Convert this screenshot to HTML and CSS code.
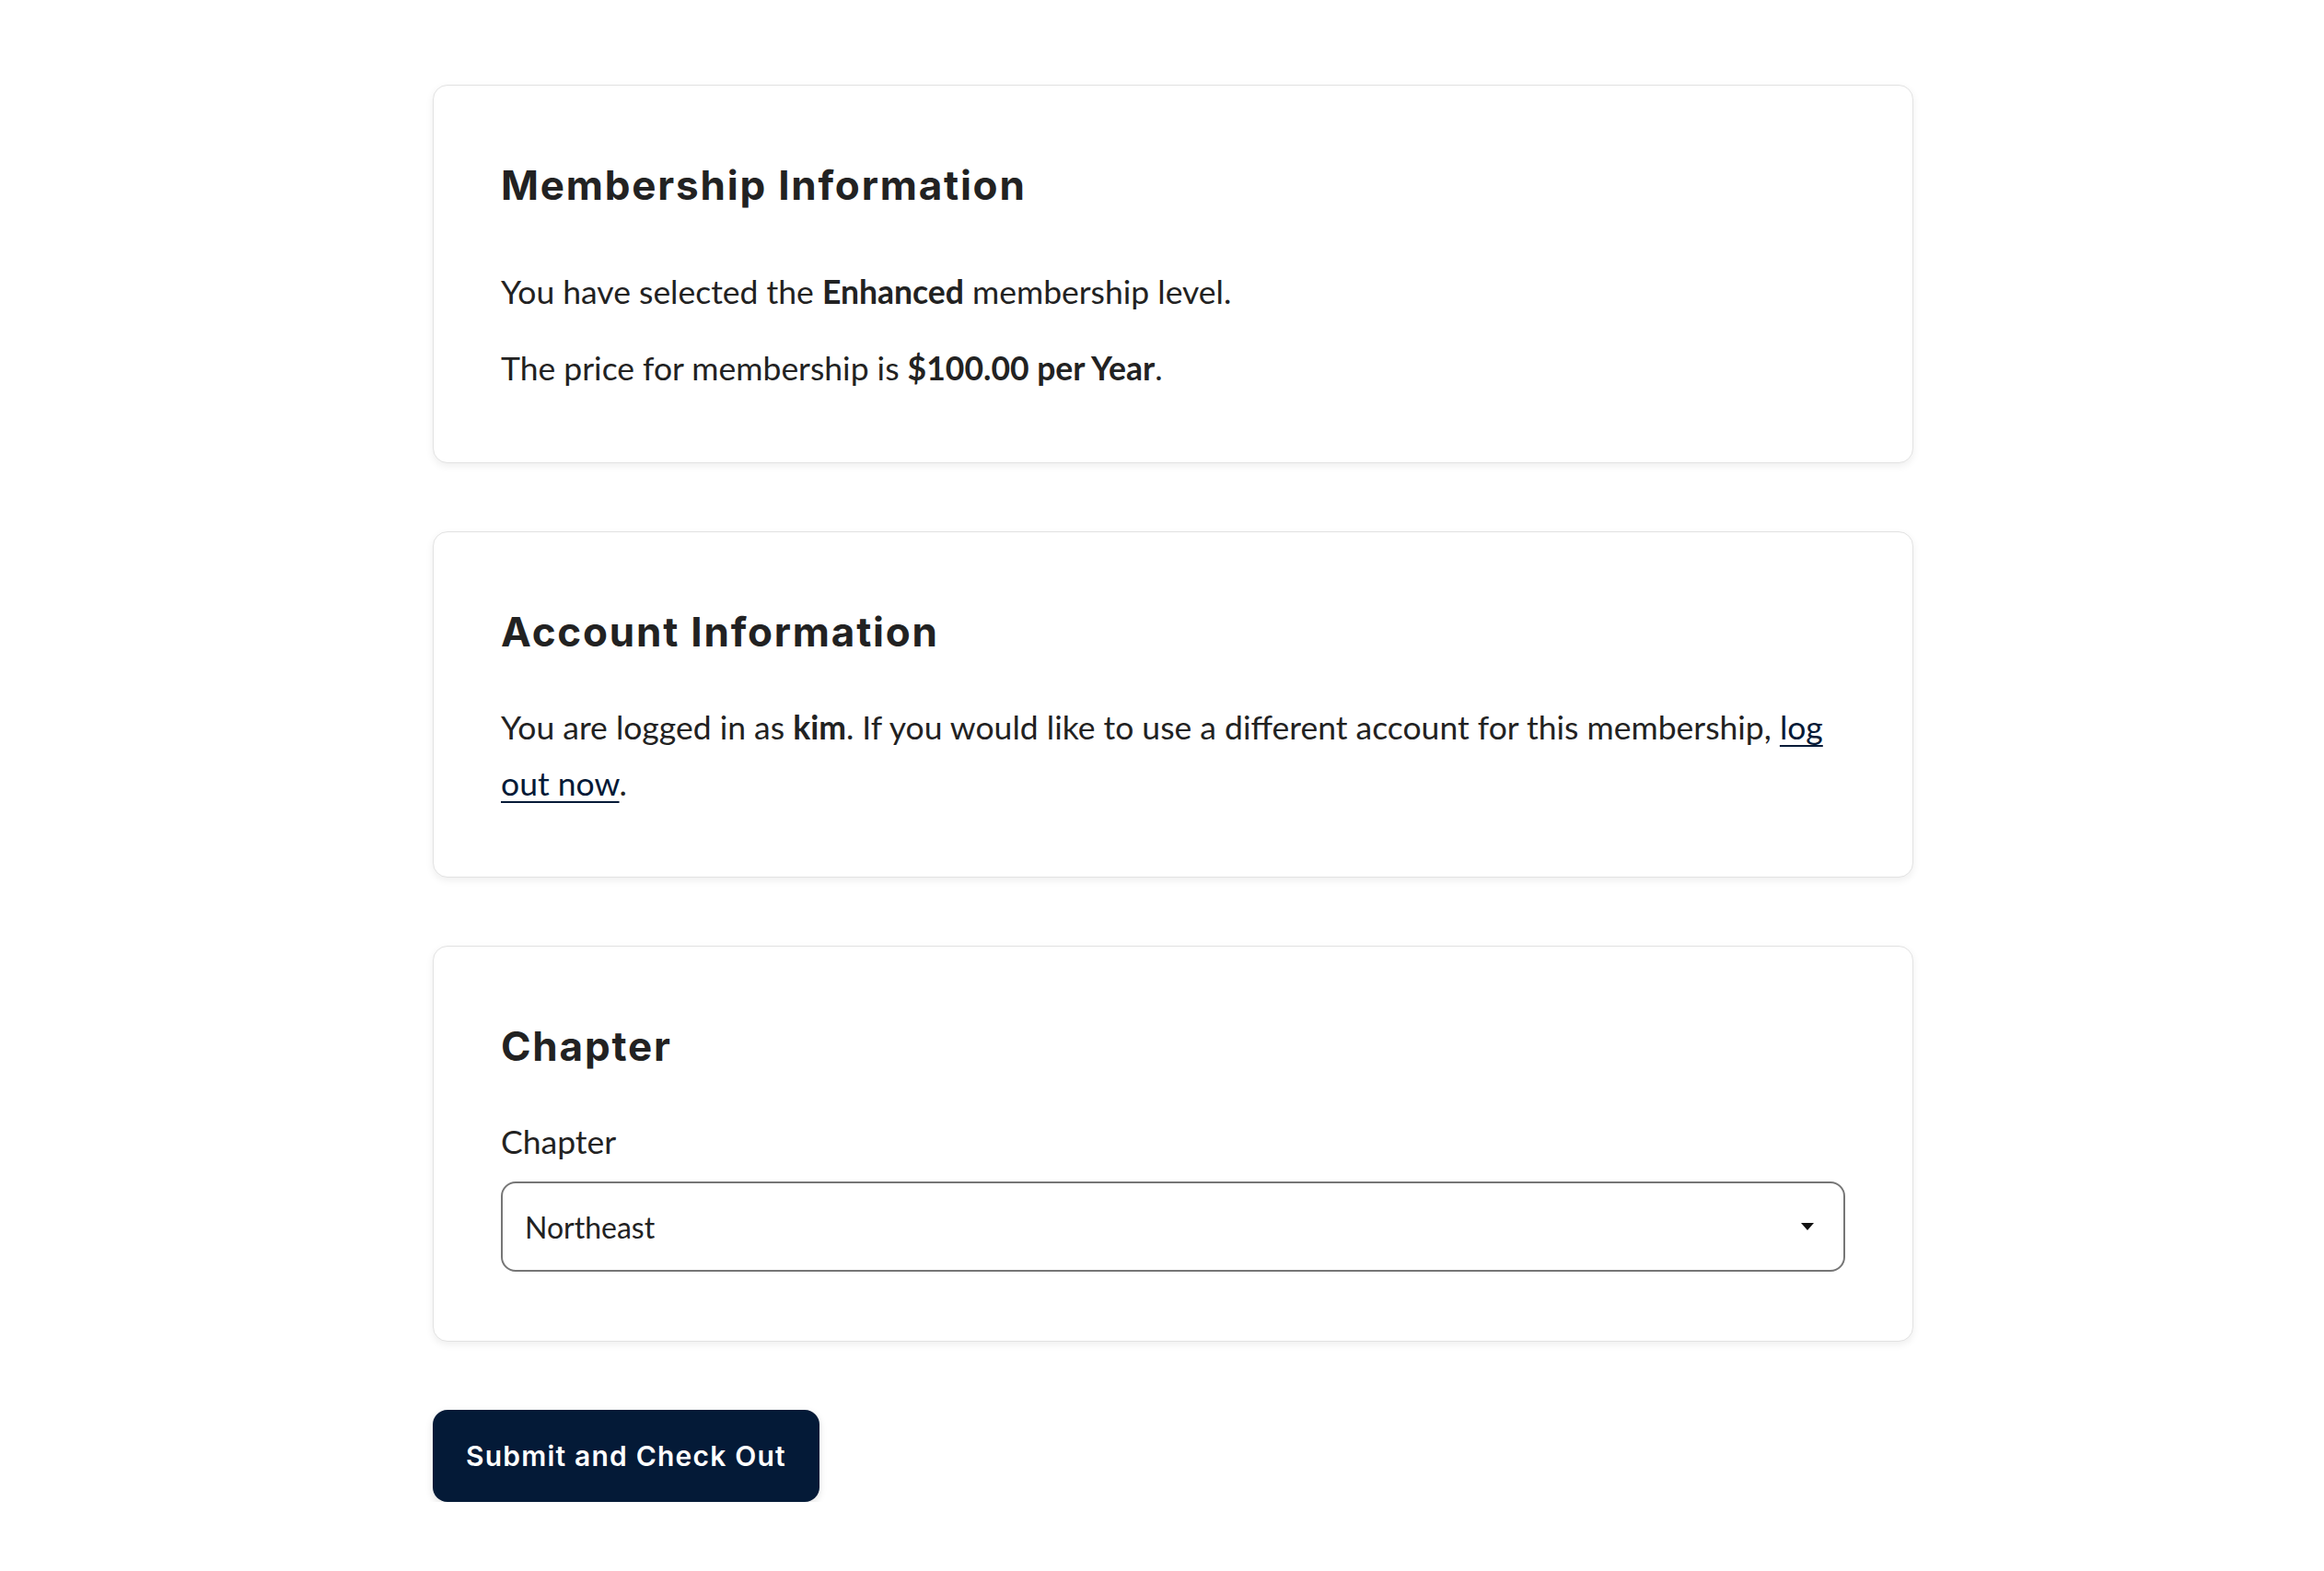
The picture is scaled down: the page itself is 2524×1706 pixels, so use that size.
FILE: index.html
```html
<!DOCTYPE html>
<html lang="en">
<head>
<meta charset="utf-8">
<title>Membership Checkout</title>
<link rel="stylesheet" href="styles.css">
</head>
<body>
<main class="checkout">
  <section class="card">
    <h2 class="card-title">Membership Information</h2>
    <div class="level">
      <p>You have selected the <strong>Enhanced</strong> membership level.</p>
      <p>The price for membership is <strong>$100.00 per Year</strong>.</p>
    </div>
  </section>

  <section class="card">
    <h2 class="card-title">Account Information</h2>
    <p class="account">You are logged in as <strong>kim</strong>. If you would like to use a different account for this membership, <a href="#" class="link">log out now</a>.</p>
  </section>

  <section class="card">
    <h2 class="card-title">Chapter</h2>
    <label class="field-label" for="chapter">Chapter</label>
    <div class="select">
      <span class="select-value" id="chapter">Northeast</span>
      <span class="select-arrow"></span>
    </div>
  </section>

  <div class="actions">
    <button class="submit" type="button">Submit and Check Out</button>
  </div>
</main>
</body>
</html>
```

FILE: styles.css
```css
html, body {
  margin: 0;
  padding: 0;
  background: #ffffff;
}

body {
  font-family: "Lato", "Liberation Sans", sans-serif;
  color: #222222;
  font-size: 35.5px;
  line-height: 61px;
}

.checkout {
  width: 1608px;
  margin-left: 470px;
  padding-top: 92px;
  display: flex;
  flex-direction: column;
  gap: 74px;
}

.card {
  background: #ffffff;
  border: 1px solid #e2e2e2;
  border-radius: 16px;
  box-shadow: 0 3px 8px rgba(0, 0, 0, 0.07);
  padding: 82px 73px 71px;
  display: flex;
  flex-direction: column;
}

.card-title {
  font-family: "Inter", "Liberation Sans", sans-serif;
  font-weight: 700;
  font-size: 44px;
  line-height: 52px;
  letter-spacing: 1.8px;
  color: #222222;
  margin: 0 0 47px;
}

.level {
  margin: 12px 0 1px;
  display: flex;
  flex-direction: column;
  gap: 22px;
}

.level p,
.account {
  margin: 0;
}

strong {
  font-weight: 700;
}

.link {
  color: #041a37;
  text-decoration: underline;
  text-decoration-thickness: 2px;
  text-underline-offset: 6px;
}

.field-label {
  display: block;
  margin-bottom: 13px;
}

.select {
  height: 98px;
  box-sizing: border-box;
  border: 2px solid #767676;
  border-radius: 16px;
  padding: 0 32px 0 24px;
  display: flex;
  align-items: center;
  justify-content: space-between;
  font-size: 32px;
  color: #222222;
  margin-bottom: 4px;
}

.select-arrow {
  width: 0;
  height: 0;
  border-left: 7px solid transparent;
  border-right: 7px solid transparent;
  border-top: 8px solid #111111;
}

.actions {
  display: flex;
}

.submit {
  font-family: "Inter", "Liberation Sans", sans-serif;
  font-weight: 600;
  font-size: 30px;
  letter-spacing: 1.2px;
  color: #ffffff;
  background: #041a37;
  border: none;
  border-radius: 16px;
  height: 100px;
  padding: 0 36px;
  box-shadow: 0 3px 8px rgba(0, 0, 0, 0.12);
  cursor: pointer;
}
```
